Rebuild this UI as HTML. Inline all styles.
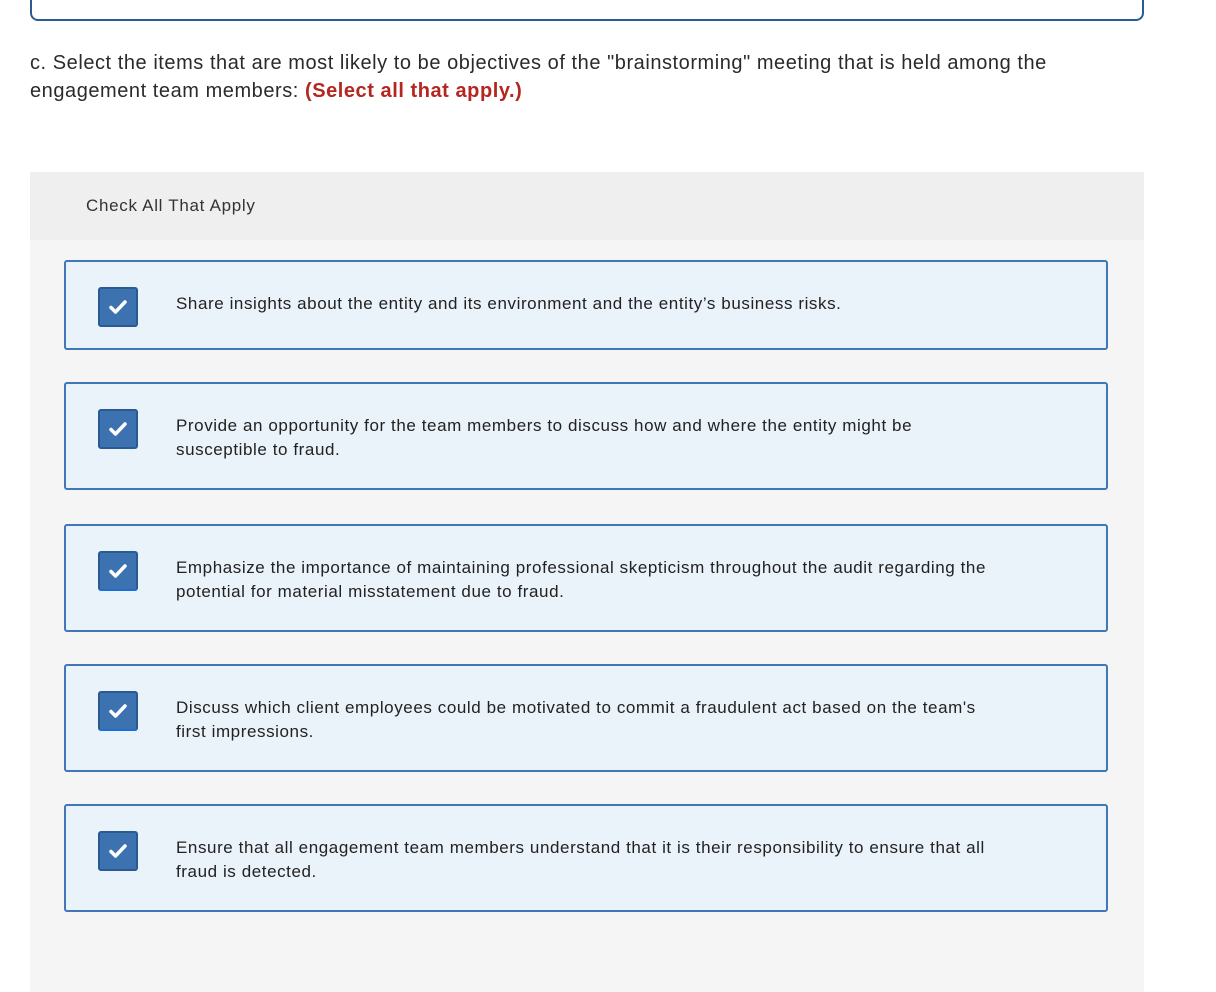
<!DOCTYPE html>
<html><head><style>
body{margin:0;width:1216px;height:976px;background:#fff;font-family:"Liberation Sans",sans-serif;color:#222;overflow:hidden;position:relative}
.top{position:absolute;left:30px;top:-10px;width:1110px;height:29px;border:2px solid #2c5b94;border-top:none;border-radius:0 0 8px 8px}
.q{position:absolute;left:30px;top:49px;font-size:20px;line-height:28px;width:1150px;color:#2a2a2a;letter-spacing:0.55px;white-space:nowrap}
.q b{color:#b4261f}
.panel{position:absolute;left:30px;top:172px;width:1114px;height:820px;background:#f5f5f5}
.head{height:68px;background:#efefef;font-size:17px;line-height:68px;padding-left:56px;color:#333;letter-spacing:0.7px}
.item{position:absolute;left:34px;width:1040px;background:#eaf2fa;border:2px solid #3f77b8;border-radius:3px}
.cb{position:absolute;left:32px;width:36px;height:36px;background:#3d72b1;border:2px solid #2a5a92;border-radius:3px}
.cb svg{position:absolute;left:9px;top:10px}
.t{position:absolute;left:110px;font-size:17px;line-height:24px;color:#222;white-space:nowrap;letter-spacing:0.58px}
</style></head><body>
<div class="top"></div>
<div class="q">c. Select the items that are most likely to be objectives of the "brainstorming" meeting that is held among the<br>engagement team members: <b>(Select all that apply.)</b></div>
<div class="panel">
<div class="head">Check All That Apply</div>
<div class="item" style="top:88px;height:86px"><div class="cb" style="top:25px"><svg width="18" height="16" viewBox="0 0 18 16"><path d="M2 8.5l4.5 4.5L16 3" stroke="#fff" stroke-width="3.5" fill="none" stroke-linecap="round" stroke-linejoin="round"/></svg></div><div class="t" style="top:30px">Share insights about the entity and its environment and the entity’s business risks.</div></div>
<div class="item" style="top:210px;height:104px"><div class="cb" style="top:25px"><svg width="18" height="16" viewBox="0 0 18 16"><path d="M2 8.5l4.5 4.5L16 3" stroke="#fff" stroke-width="3.5" fill="none" stroke-linecap="round" stroke-linejoin="round"/></svg></div><div class="t" style="top:30px">Provide an opportunity for the team members to discuss how and where the entity might be<br>susceptible to fraud.</div></div>
<div class="item" style="top:352px;height:104px"><div class="cb" style="top:25px;border-bottom-color:#1a6fd6"><svg width="18" height="16" viewBox="0 0 18 16"><path d="M2 8.5l4.5 4.5L16 3" stroke="#fff" stroke-width="3.5" fill="none" stroke-linecap="round" stroke-linejoin="round"/></svg></div><div class="t" style="top:30px">Emphasize the importance of maintaining professional skepticism throughout the audit regarding the<br>potential for material misstatement due to fraud.</div></div>
<div class="item" style="top:492px;height:104px"><div class="cb" style="top:25px;border-bottom-color:#1a6fd6"><svg width="18" height="16" viewBox="0 0 18 16"><path d="M2 8.5l4.5 4.5L16 3" stroke="#fff" stroke-width="3.5" fill="none" stroke-linecap="round" stroke-linejoin="round"/></svg></div><div class="t" style="top:30px">Discuss which client employees could be motivated to commit a fraudulent act based on the team's<br>first impressions.</div></div>
<div class="item" style="top:632px;height:104px"><div class="cb" style="top:25px"><svg width="18" height="16" viewBox="0 0 18 16"><path d="M2 8.5l4.5 4.5L16 3" stroke="#fff" stroke-width="3.5" fill="none" stroke-linecap="round" stroke-linejoin="round"/></svg></div><div class="t" style="top:30px">Ensure that all engagement team members understand that it is their responsibility to ensure that all<br>fraud is detected.</div></div>
</div>
</body></html>
